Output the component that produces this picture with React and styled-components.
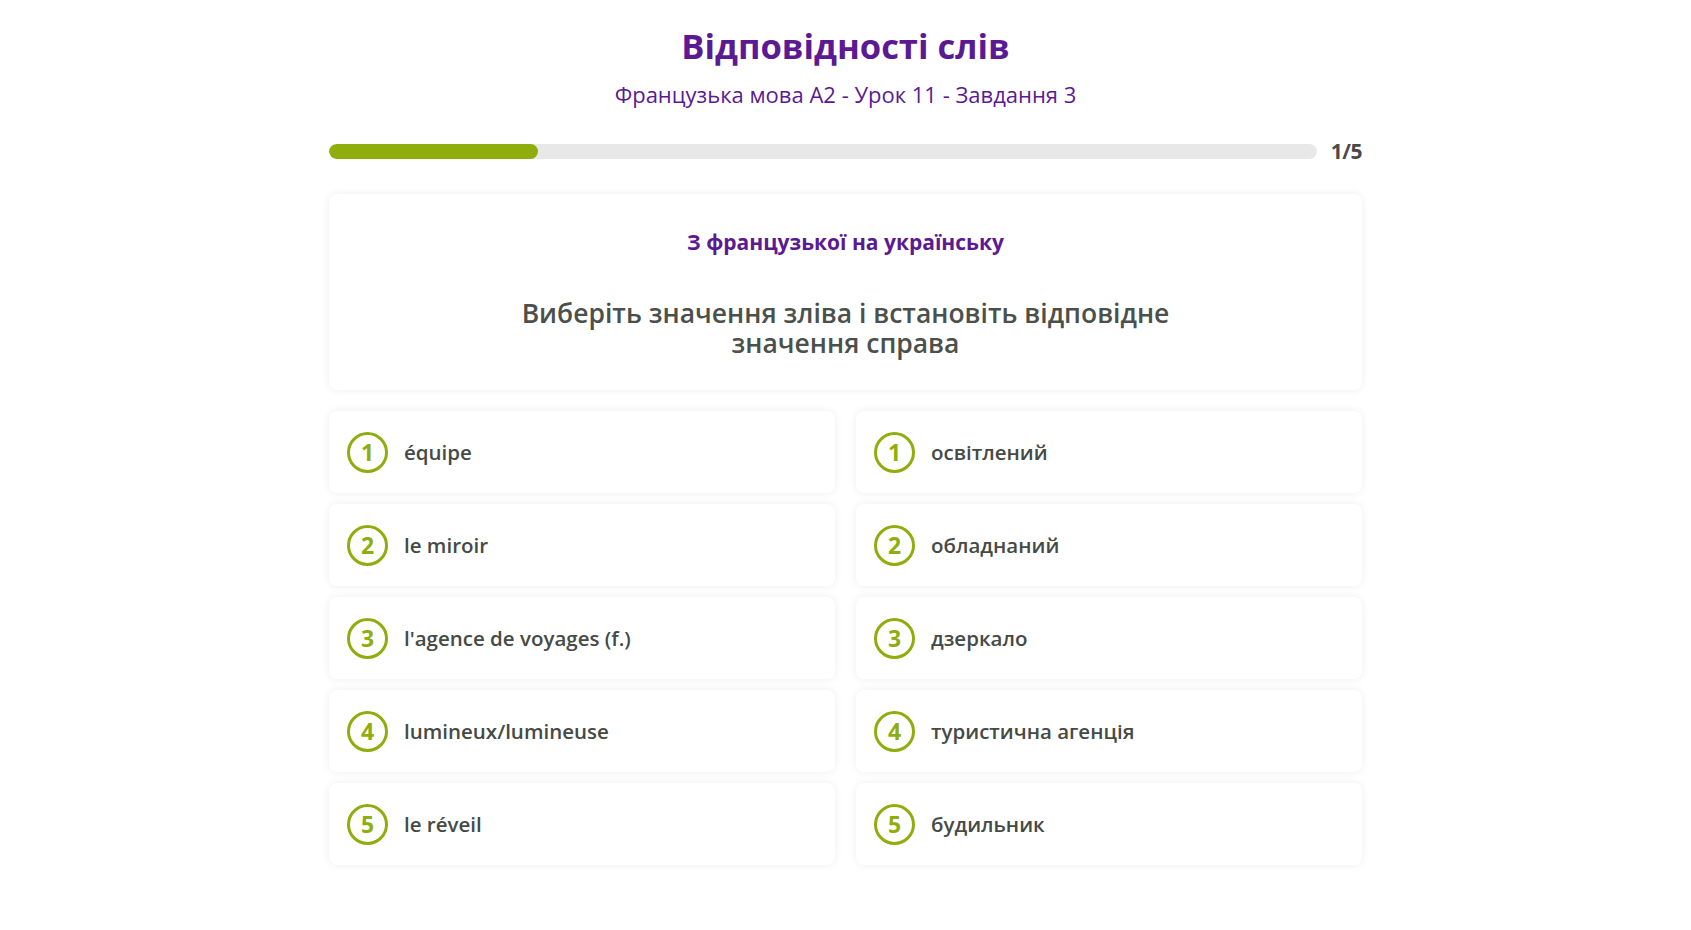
import React from "react";
import styled, { createGlobalStyle } from "styled-components";

const GlobalStyle = createGlobalStyle`
  body {
    margin: 0;
    background: #ffffff;
    font-family: "Open Sans", "Noto Sans", sans-serif;
  }
`;

const leftWords = [
  "équipe",
  "le miroir",
  "l'agence de voyages (f.)",
  "lumineux/lumineuse",
  "le réveil",
];

const rightWords = [
  "освітлений",
  "обладнаний",
  "дзеркало",
  "туристична агенція",
  "будильник",
];

function App() {
  const step = 1;
  const total = 5;
  return (
    <>
      <GlobalStyle />
      <Page>
        <Title>Відповідності слів</Title>
        <SubTitle>Французька мова А2 - Урок 11 - Завдання 3</SubTitle>
        <ProgressRow>
          <Track>
            <Fill style={{ width: `${(step / total) * 100 * 1.06}%` }} />
          </Track>
          <Counter>
            {step}/{total}
          </Counter>
        </ProgressRow>
        <TaskCard>
          <Direction>З французької на українську</Direction>
          <Instruction>
            Виберіть значення зліва і встановіть відповідне
            <br />
            значення справа
          </Instruction>
        </TaskCard>
        <Pairs>
          {leftWords.map((word, i) => (
            <React.Fragment key={word}>
              <WordCard>
                <Num>{i + 1}</Num>
                <Word>{word}</Word>
              </WordCard>
              <WordCard>
                <Num>{i + 1}</Num>
                <Word>{rightWords[i]}</Word>
              </WordCard>
            </React.Fragment>
          ))}
        </Pairs>
      </Page>
    </>
  );
}

export default App;

const Page = styled.div`
  width: 1033px;
  margin: 0 auto;
  padding: 24px 0 40px;
  display: flex;
  flex-direction: column;
`;

const Title = styled.h1`
  margin: 0;
  text-align: center;
  font-size: 34.5px;
  line-height: 44px;
  font-weight: 700;
  color: #5b1a93;
`;

const SubTitle = styled.div`
  margin-top: 13px;
  text-align: center;
  font-size: 22px;
  line-height: 26px;
  color: #5b1a93;
`;

const ProgressRow = styled.div`
  margin-top: 33px;
  display: flex;
  align-items: center;
  gap: 14px;
  height: 22px;
`;

const Track = styled.div`
  flex: 1;
  height: 15px;
  border-radius: 8px;
  background: #e8e8e8;
  overflow: hidden;
`;

const Fill = styled.div`
  height: 100%;
  border-radius: 8px;
  background: #8fae0e;
`;

const Counter = styled.div`
  font-size: 21px;
  font-weight: 700;
  color: #4a4a4a;
  letter-spacing: -0.5px;
`;

const TaskCard = styled.div`
  margin-top: 32px;
  padding: 34px 20px 32px;
  border-radius: 8px;
  background: #fff;
  box-shadow: 0 0 8px rgba(0, 0, 0, 0.07);
  text-align: center;
`;

const Direction = styled.div`
  font-size: 21px;
  line-height: 28px;
  font-weight: 700;
  color: #5b1a93;
`;

const Instruction = styled.div`
  margin-top: 42px;
  font-size: 26.5px;
  line-height: 30px;
  font-weight: 600;
  color: #4b504b;
`;

const Pairs = styled.div`
  margin-top: 21px;
  display: grid;
  grid-template-columns: 1fr 1fr;
  grid-auto-rows: 82px;
  column-gap: 21px;
  row-gap: 11px;
`;

const WordCard = styled.div`
  display: flex;
  align-items: center;
  gap: 16px;
  padding: 0 18px;
  border-radius: 8px;
  background: #fff;
  box-shadow: 0 0 8px rgba(0, 0, 0, 0.07);
`;

const Num = styled.div`
  width: 41px;
  height: 41px;
  box-sizing: border-box;
  border: 3px solid #8fae0e;
  border-radius: 50%;
  display: flex;
  align-items: center;
  justify-content: center;
  font-size: 23px;
  font-weight: 700;
  color: #8fae0e;
`;

const Word = styled.div`
  font-size: 20.5px;
  font-weight: 600;
  color: #454a45;
`;
